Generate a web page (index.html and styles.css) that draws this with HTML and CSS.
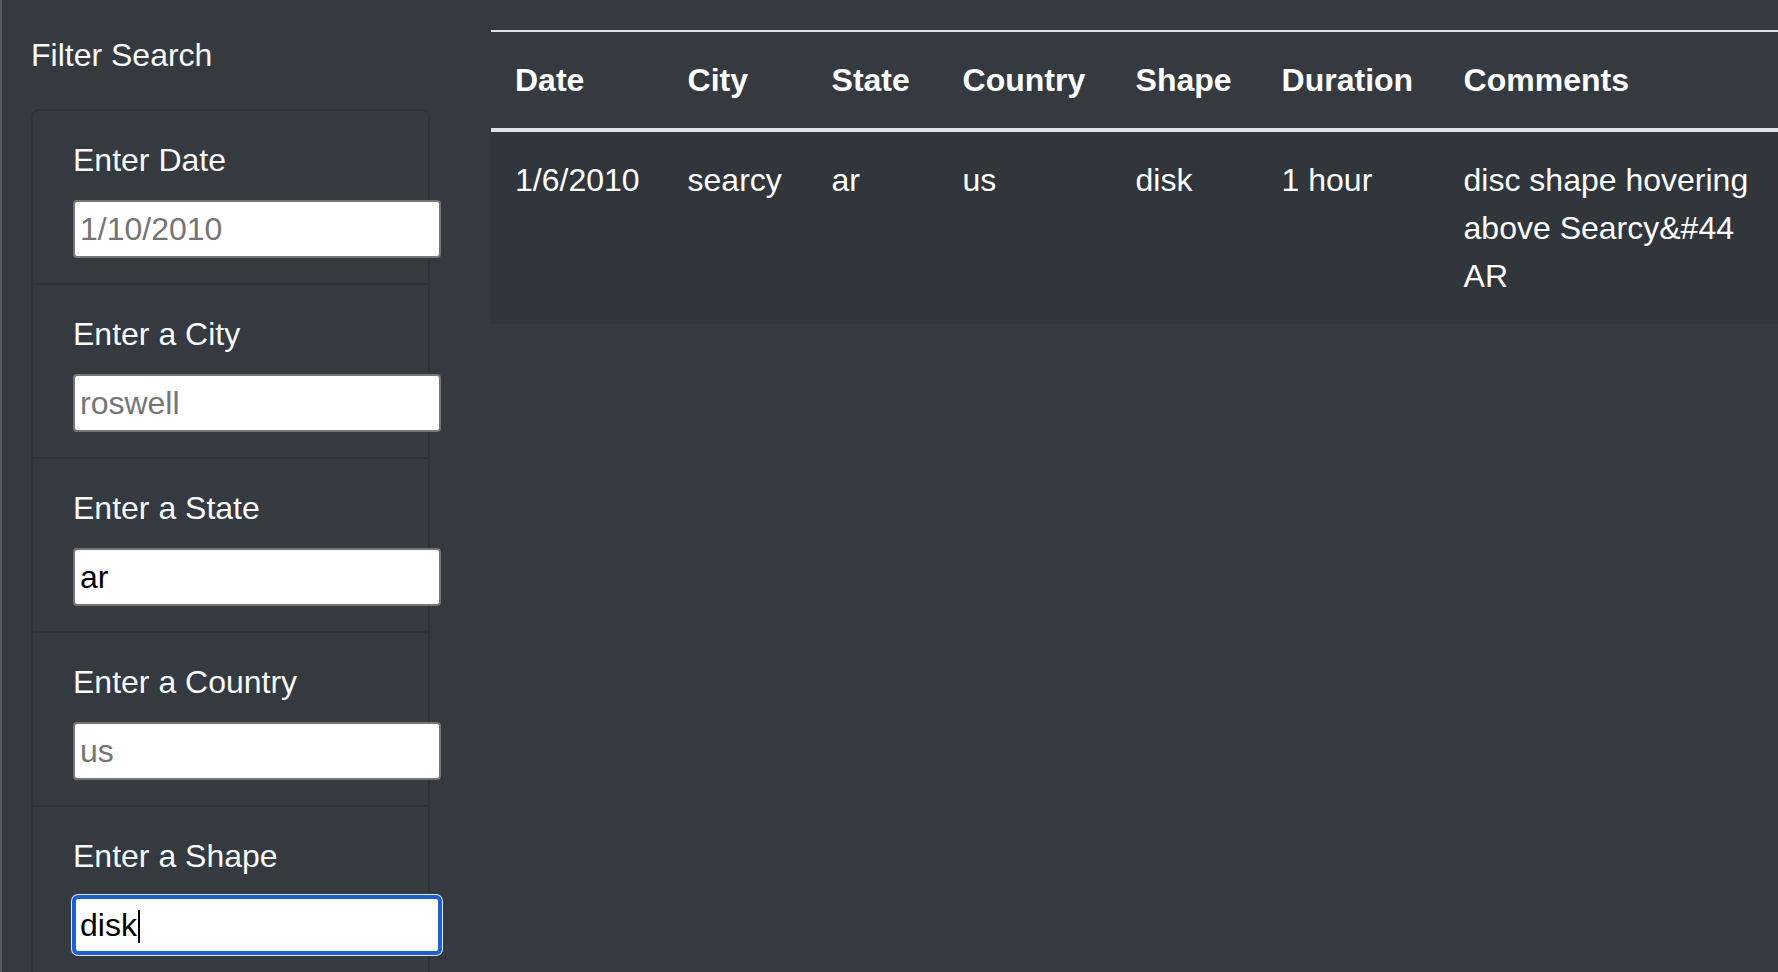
FILE: index.html
```html
<!DOCTYPE html>
<html lang="en">
<head>
<meta charset="utf-8">
<title>UFO Sightings</title>
<link rel="stylesheet" href="styles.css">
</head>
<body>
<div class="page">
  <aside class="sidebar">
    <h5 class="filter-title">Filter Search</h5>
    <form class="card">
      <ul class="list-group">
        <li class="list-item">
          <label class="field-label" for="datetime">Enter Date</label>
          <input class="field" id="datetime" type="text" placeholder="1/10/2010">
        </li>
        <li class="list-item">
          <label class="field-label" for="city">Enter a City</label>
          <input class="field" id="city" type="text" placeholder="roswell">
        </li>
        <li class="list-item">
          <label class="field-label" for="state">Enter a State</label>
          <input class="field" id="state" type="text" placeholder="ca" value="ar">
        </li>
        <li class="list-item">
          <label class="field-label" for="country">Enter a Country</label>
          <input class="field" id="country" type="text" placeholder="us">
        </li>
        <li class="list-item">
          <label class="field-label" for="shape">Enter a Shape</label>
          <span class="field-wrap">
            <input class="field focused" id="shape" type="text" placeholder="triangle" value="disk">
            <span class="caret"></span>
          </span>
        </li>
      </ul>
    </form>
  </aside>
  <main class="main">
    <table class="ufo-table">
      <colgroup>
        <col class="c-date">
        <col class="c-city">
        <col class="c-state">
        <col class="c-country">
        <col class="c-shape">
        <col class="c-duration">
        <col class="c-comments">
      </colgroup>
      <thead>
        <tr>
          <th>Date</th>
          <th>City</th>
          <th>State</th>
          <th>Country</th>
          <th>Shape</th>
          <th>Duration</th>
          <th>Comments</th>
        </tr>
      </thead>
      <tbody>
        <tr class="striped">
          <td>1/6/2010</td>
          <td>searcy</td>
          <td>ar</td>
          <td>us</td>
          <td>disk</td>
          <td>1 hour</td>
          <td>disc shape hovering above Searcy&amp;#44 AR</td>
        </tr>
      </tbody>
    </table>
  </main>
</div>
</body>
</html>
```

FILE: styles.css
```css
* {
  box-sizing: border-box;
}

html, body {
  margin: 0;
  padding: 0;
}

body {
  width: 1778px;
  height: 972px;
  overflow: hidden;
  background: #343a40;
  color: #ffffff;
  font-family: "Liberation Sans", Arial, sans-serif;
  font-size: 32px;
  line-height: 48px;
}

.page {
  display: flex;
  align-items: flex-start;
  height: 972px;
  border-left: 2px solid #565b60;
}

.sidebar {
  flex: 0 0 auto;
  width: 458px;
  padding: 0 30px 0 29px;
}

.filter-title {
  margin: 0;
  padding-top: 35px;
  font-size: 32px;
  font-weight: normal;
  line-height: 40px;
  color: #f8f9fa;
}

.card {
  margin: 34px 0 0 0;
  border: 2px solid #2e3338;
  border-radius: 8px;
  width: 399px;
}

.list-group {
  list-style: none;
  margin: 0;
  padding: 0;
}

.list-item {
  padding: 25px 40px 25px 40px;
}

.list-item + .list-item {
  border-top: 2px solid #2e3338;
}

.field-label {
  display: block;
  margin-bottom: 16px;
  font-size: 32px;
  line-height: 48px;
  color: #f8f9fa;
}

.field {
  display: block;
  width: 368px;
  height: 58px;
  margin: 0;
  padding: 0 5px;
  border: 2px solid #767676;
  border-radius: 4px;
  background: #ffffff;
  color: #000000;
  font-family: "Liberation Sans", Arial, sans-serif;
  font-size: 32px;
  outline: none;
}

.field::placeholder {
  color: #757575;
  opacity: 1;
}

.field-wrap {
  position: relative;
  display: block;
  width: 368px;
}

.focused {
  border-color: #1f5fcf;
  border-width: 3px;
  padding-left: 4px;
  border-radius: 5px;
  box-shadow: 0 0 0 1px #1f5fcf, 0 0 0 2px #dde6f3;
  caret-color: transparent;
}

.caret {
  position: absolute;
  left: 65px;
  top: 14px;
  width: 2px;
  height: 33px;
  background: #000000;
}

.main {
  flex: 1 1 auto;
  padding: 30px 0 0 31px;
  min-width: 0;
}

.ufo-table {
  width: 1287px;
  border-collapse: collapse;
  color: #ffffff;
}

.c-date { width: 172px; }
.c-city { width: 144px; }
.c-state { width: 131px; }
.c-country { width: 173px; }
.c-shape { width: 146px; }
.c-duration { width: 182px; }

.ufo-table th,
.ufo-table td {
  padding: 24px;
  text-align: left;
  vertical-align: top;
  line-height: 48px;
  font-size: 32px;
}

.ufo-table th {
  font-weight: bold;
  border-top: 2px solid #dee2e6;
  border-bottom: 4px solid #dee2e6;
}

.striped {
  background: #31363c;
}
```
